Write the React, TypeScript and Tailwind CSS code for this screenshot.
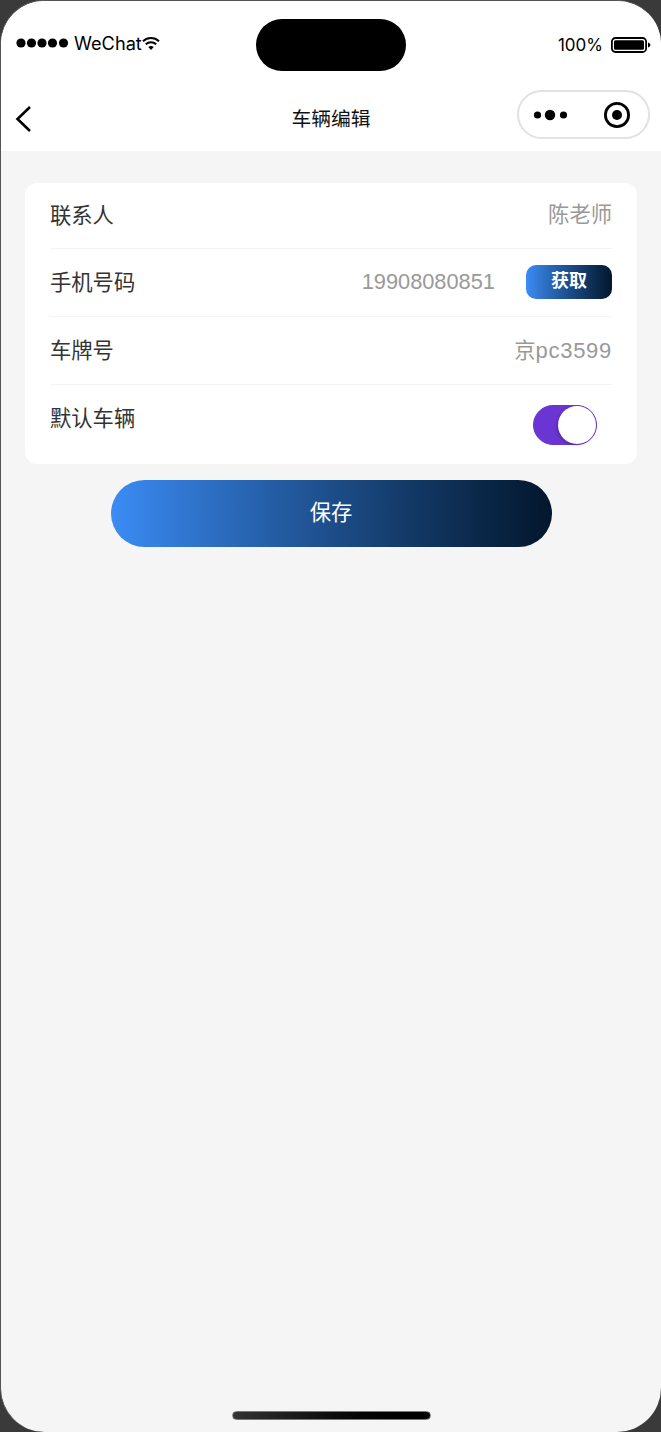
const cjk = "font-['Liberation_Sans','Noto_Sans_CJK_SC',sans-serif]";

function Row({ label, children, className }: { label: string; children?: React.ReactNode; className: string }) {
  return (
    <div className={`flex items-center justify-between ${className}`}>
      <span className="text-[21.3px] leading-[30px] text-[#333333]">{label}</span>
      {children}
    </div>
  );
}

export default function App() {
  return (
    <div className={`w-[661px] h-[1432px] overflow-hidden bg-[#3a3a3a] ${cjk}`}>
      <div className="h-full flex flex-col overflow-hidden rounded-[44px] border-t border-l border-[#555555] bg-[#f5f5f5]">
        <header className="flex flex-col h-[150px] bg-white">
          <div className="flex h-[84px] items-start">
            <div className="flex items-center w-[255px] pl-[15px] pt-[31px]">
              <svg width="53" height="12" viewBox="0 0 53 12" className="shrink-0">
                <circle cx="5" cy="6" r="4.6" fill="#000" />
                <circle cx="15.5" cy="6" r="4.6" fill="#000" />
                <circle cx="26" cy="6" r="4.6" fill="#000" />
                <circle cx="36.5" cy="6" r="4.6" fill="#000" />
                <circle cx="47.5" cy="6" r="4.6" fill="#000" />
              </svg>
              <span className="ml-[5px] text-[18.2px] leading-[22px] text-black font-['Inter',sans-serif]">WeChat</span>
              <svg width="18" height="15" viewBox="0 0 18 15" className="shrink-0">
                <path d="M1 5.2C5.5 1 12.5 1 17 5.2" stroke="#000" strokeWidth="2" fill="none" />
                <path d="M3.8 8.2C6.8 5.5 11.2 5.5 14.2 8.2" stroke="#000" strokeWidth="2" fill="none" />
                <path d="M6.3 10.9C7.9 9.6 10.1 9.6 11.7 10.9L9 14Z" fill="#000" />
              </svg>
            </div>
            <div className="mt-[18px] h-[52px] w-[150px] rounded-[26px] bg-black" />
            <div className="flex flex-1 items-center justify-end pr-[10px] pt-[34px]">
              <span className="text-[17px] leading-[20px] text-black font-['Inter',sans-serif]">100%</span>
              <svg width="40" height="16" viewBox="0 0 40 16" className="ml-[8px] shrink-0">
                <rect x="0.9" y="1" width="34.2" height="14" rx="3.5" stroke="#000" strokeWidth="1.8" fill="none" />
                <rect x="3" y="3.2" width="30" height="9.6" rx="1.6" fill="#000" />
                <path d="M37 5.5C38.5 5.9 39.4 6.8 39.4 8C39.4 9.2 38.5 10.1 37 10.5Z" fill="#000" />
              </svg>
            </div>
          </div>
          <div className="flex h-[66px] items-center">
            <div className="w-[260px] pl-[14px] pt-[2px]">
              <svg width="17" height="28" viewBox="0 0 17 28" className="block">
                <path d="M15 2L2.5 14L15 26" stroke="#000" strokeWidth="2.6" fill="none" />
              </svg>
            </div>
            <h1 className="w-[140px] text-center text-[19.8px] font-normal leading-[28px] text-[#111111] pt-[1px]">车辆编辑</h1>
            <div className="ml-[116px] mb-[7px] flex h-[49px] w-[133px] items-center rounded-[25px] border-2 border-[#e2e2e2] bg-white pl-[14px]">
              <svg width="36" height="14" viewBox="0 0 36 14" className="shrink-0">
                <circle cx="4.5" cy="7" r="3.6" fill="#000" />
                <circle cx="17" cy="7" r="5.2" fill="#000" />
                <circle cx="30.5" cy="7" r="3.6" fill="#000" />
              </svg>
              <svg width="28" height="28" viewBox="0 0 28 28" className="ml-[34px] shrink-0">
                <circle cx="14" cy="14" r="11.6" stroke="#000" strokeWidth="2.8" fill="none" />
                <circle cx="14" cy="14" r="5" fill="#000" />
              </svg>
            </div>
          </div>
        </header>

        <main className="flex flex-col items-center px-[24px] pt-[32px] flex-1">
          <section className="w-[612px] rounded-[12px] bg-white pl-[25px] pr-[25px]">
            <Row label="联系人" className="h-[66px] border-b border-[#f4f4f4]">
              <span className="mb-[2px] text-[21.3px] leading-[30px] text-[#999999]">陈老师</span>
            </Row>
            <Row label="手机号码" className="h-[68px] border-b border-[#f4f4f4]">
              <div className="flex items-center mb-[2px]">
                <span className="text-[21.8px] leading-[30px] text-[#999999]">19908080851</span>
                <button className="ml-[31px] flex h-[34px] w-[86px] items-center justify-center rounded-[10px] bg-gradient-to-r from-[#3b8cf5] to-[#04172d] text-[18px] font-bold text-white">
                  获取
                </button>
              </div>
            </Row>
            <Row label="车牌号" className="h-[68px] border-b border-[#f4f4f4]">
              <span className="text-[21.3px] leading-[30px] text-[#999999]">
                京<span className="text-[22px] tracking-[0.7px]">pc3599</span>
              </span>
            </Row>
            <Row label="默认车辆" className="h-[79px] pb-[12px]">
              <div className="mr-[15px] mt-[12px] flex h-[40px] w-[64px] justify-end rounded-[20px] border border-[#6a35d2] bg-[#6a35d2]">
                <div className="h-[38px] w-[38px] rounded-full bg-white shadow-[-1px_1px_3px_rgba(0,0,0,0.25)]" />
              </div>
            </Row>
          </section>
          <button className="mt-[16px] ml-[1px] h-[67px] w-[441px] rounded-[34px] bg-gradient-to-r from-[#3b8cf5] to-[#04172d] pr-[1px] text-[21.3px] font-normal text-white">
            保存
          </button>
        </main>

        <div className="flex justify-center pb-[12px]">
          <div className="h-[9px] w-[199px] rounded-[5px] border border-[#777777] bg-gradient-to-r from-[#333333] to-[#000000]" />
        </div>
      </div>
    </div>
  );
}
